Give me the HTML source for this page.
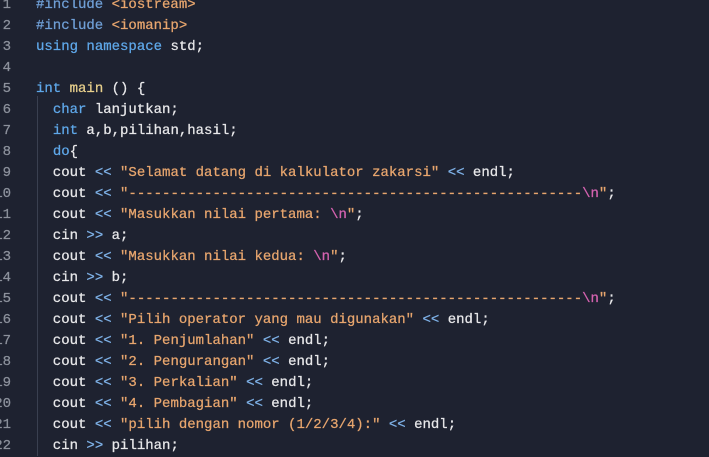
<!DOCTYPE html>
<html><head><meta charset="utf-8"><style>
html,body{margin:0;padding:0;background:#1e2230;width:709px;height:451px;overflow:hidden}
.w{position:absolute;left:0;top:-5px;font-family:"Liberation Mono","DejaVu Sans Mono",monospace;font-size:14px;line-height:21px;color:#e8e8ea;-webkit-text-stroke:0.25px currentColor}
.l{position:relative;height:21px;white-space:pre}
.n{position:absolute;right:calc(100% - 11px);color:#8c919c;text-align:right}
.c{position:absolute;left:36px}
.g{position:absolute;left:37px;top:96px;width:1px;height:360px;background:#3a4050}
.k{color:#5fa8ea}.p{color:#6f9fd6}.s{color:#e8a66e}.e{color:#d563b0}.f{color:#e8d08c}.o{color:#7fb2e8}
</style></head><body>
<div class="g"></div>
<div class="w">
<div class="l"><span class="n">1</span><span class="c"><span class="p">#include</span> <span class="s">&lt;iostream&gt;</span></span></div>
<div class="l"><span class="n">2</span><span class="c"><span class="p">#include</span> <span class="s">&lt;iomanip&gt;</span></span></div>
<div class="l"><span class="n">3</span><span class="c"><span class="k">using</span> <span class="k">namespace</span> std;</span></div>
<div class="l"><span class="n">4</span><span class="c"></span></div>
<div class="l"><span class="n">5</span><span class="c"><span class="k">int</span> <span class="f">main</span> () {</span></div>
<div class="l"><span class="n">6</span><span class="c">  <span class="k">char</span> lanjutkan;</span></div>
<div class="l"><span class="n">7</span><span class="c">  <span class="k">int</span> a,b,pilihan,hasil;</span></div>
<div class="l"><span class="n">8</span><span class="c">  <span class="k">do</span>{</span></div>
<div class="l"><span class="n">9</span><span class="c">  cout <span class="o">&lt;&lt;</span> <span class="s">"Selamat datang di kalkulator zakarsi"</span> <span class="o">&lt;&lt;</span> endl;</span></div>
<div class="l"><span class="n">10</span><span class="c">  cout <span class="o">&lt;&lt;</span> <span class="s">"------------------------------------------------------<span class="e">\n</span>"</span>;</span></div>
<div class="l"><span class="n">11</span><span class="c">  cout <span class="o">&lt;&lt;</span> <span class="s">"Masukkan nilai pertama: <span class="e">\n</span>"</span>;</span></div>
<div class="l"><span class="n">12</span><span class="c">  cin <span class="o">&gt;&gt;</span> a;</span></div>
<div class="l"><span class="n">13</span><span class="c">  cout <span class="o">&lt;&lt;</span> <span class="s">"Masukkan nilai kedua: <span class="e">\n</span>"</span>;</span></div>
<div class="l"><span class="n">14</span><span class="c">  cin <span class="o">&gt;&gt;</span> b;</span></div>
<div class="l"><span class="n">15</span><span class="c">  cout <span class="o">&lt;&lt;</span> <span class="s">"------------------------------------------------------<span class="e">\n</span>"</span>;</span></div>
<div class="l"><span class="n">16</span><span class="c">  cout <span class="o">&lt;&lt;</span> <span class="s">"Pilih operator yang mau digunakan"</span> <span class="o">&lt;&lt;</span> endl;</span></div>
<div class="l"><span class="n">17</span><span class="c">  cout <span class="o">&lt;&lt;</span> <span class="s">"1. Penjumlahan"</span> <span class="o">&lt;&lt;</span> endl;</span></div>
<div class="l"><span class="n">18</span><span class="c">  cout <span class="o">&lt;&lt;</span> <span class="s">"2. Pengurangan"</span> <span class="o">&lt;&lt;</span> endl;</span></div>
<div class="l"><span class="n">19</span><span class="c">  cout <span class="o">&lt;&lt;</span> <span class="s">"3. Perkalian"</span> <span class="o">&lt;&lt;</span> endl;</span></div>
<div class="l"><span class="n">20</span><span class="c">  cout <span class="o">&lt;&lt;</span> <span class="s">"4. Pembagian"</span> <span class="o">&lt;&lt;</span> endl;</span></div>
<div class="l"><span class="n">21</span><span class="c">  cout <span class="o">&lt;&lt;</span> <span class="s">"pilih dengan nomor (1/2/3/4):"</span> <span class="o">&lt;&lt;</span> endl;</span></div>
<div class="l"><span class="n">22</span><span class="c">  cin <span class="o">&gt;&gt;</span> pilihan;</span></div>
</div>
</body></html>
